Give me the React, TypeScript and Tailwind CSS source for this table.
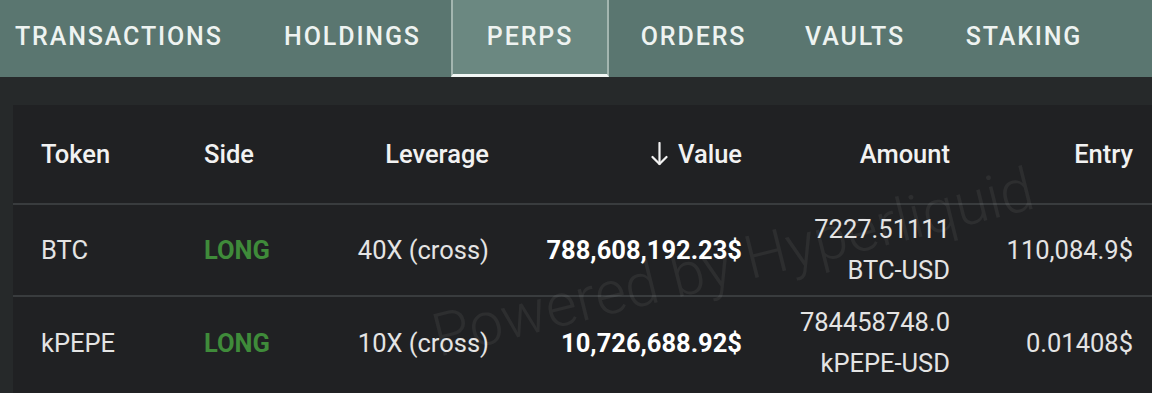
import React from "react";

const tabs = [
  { label: "Transactions", w: "w-[254px] justify-start pl-[15px]" },
  { label: "Holdings", w: "w-[197px] justify-center" },
  { label: "Perps", w: "w-[158px] justify-center" },
  { label: "Orders", w: "w-[169px] justify-center" },
  { label: "Vaults", w: "w-[154px] justify-center" },
  { label: "Staking", w: "w-[184px] justify-center" },
];

const rows = [
  {
    token: "BTC",
    side: "LONG",
    leverage: "40X (cross)",
    value: "788,608,192.23$",
    amount: "7227.51111",
    pair: "BTC-USD",
    entry: "110,084.9$",
  },
  {
    token: "kPEPE",
    side: "LONG",
    leverage: "10X (cross)",
    value: "10,726,688.92$",
    amount: "784458748.0",
    pair: "kPEPE-USD",
    entry: "0.01408$",
  },
];

const cols = "grid grid-cols-[163px_120px_165px_253px_208px_183px] items-center pl-[28px]";

function ArrowDown() {
  return (
    <svg width="17" height="24" viewBox="0 0 17 24" fill="none" stroke="currentColor" strokeWidth="2.2" strokeLinecap="round" strokeLinejoin="round">
      <path d="M8.5 1v21" />
      <path d="M1.5 15 8.5 22l7-7" />
    </svg>
  );
}

export default function App() {
  return (
    <div className="w-[1152px] h-[393px] overflow-hidden bg-[#26292a] font-['Roboto',sans-serif]">
      <nav className="flex h-[77px] bg-[#5a7670]">
        {tabs.map((t) => {
          const active = t.label === "Perps";
          return (
            <div
              key={t.label}
              className={`flex shrink-0 items-center pb-[4px] text-[25px] font-medium uppercase tracking-[0.075em] text-[#eef3f1] ${t.w} ${
                active ? "bg-[#6b8881] border-x-2 border-[#a3b6b0] border-b-[3px] border-b-[#f2f7f5] pt-[3px]" : ""
              }`}
            >
              {t.label}
            </div>
          );
        })}
      </nav>

      <div className="relative ml-[13px] mt-[28px] h-[300px] bg-[#202123] overflow-hidden">
        <div className={`${cols} h-[100px] border-b-2 border-[#393c3e] text-[25.5px] font-medium text-[#f2f2f2]`}>
          <div>Token</div>
          <div>Side</div>
          <div className="text-right">Leverage</div>
          <div className="flex items-center justify-end gap-[10px]">
            <ArrowDown />
            <span>Value</span>
          </div>
          <div className="text-right">Amount</div>
          <div className="text-right">Entry</div>
        </div>

        {rows.map((r, i) => (
          <div
            key={r.token}
            className={`${cols} h-[92px] text-[25.5px] text-[#e4e4e4] ${i === 0 ? "border-b-2 border-[#393c3e]" : ""}`}
          >
            <div>{r.token}</div>
            <div className="font-bold text-[#3f8b3a]">{r.side}</div>
            <div className="text-right">{r.leverage}</div>
            <div className="text-right font-bold text-white">{r.value}</div>
            <div className="text-right leading-[41px]">
              <div>{r.amount}</div>
              <div>{r.pair}</div>
            </div>
            <div className="text-right">{r.entry}</div>
          </div>
        ))}

        <div className="pointer-events-none absolute left-[720px] top-[158px] -translate-x-1/2 -translate-y-1/2 -rotate-[14deg] whitespace-nowrap text-[60px] font-light text-white/[0.06]">
          Powered by Hyperliquid
        </div>
      </div>
    </div>
  );
}
